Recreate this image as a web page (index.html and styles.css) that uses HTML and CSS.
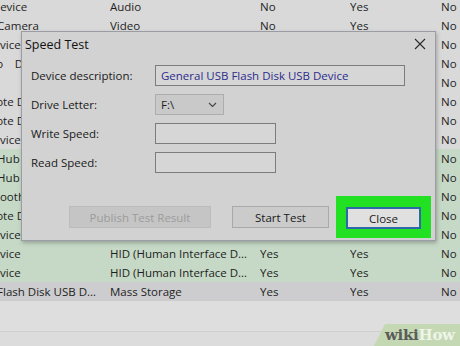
FILE: index.html
```html
<!DOCTYPE html>
<html lang="en">
<head>
    <meta charset="UTF-8">
    <title>Speed Test</title>
    <link rel="stylesheet" href="styles.css">
</head>
<body>
    <div class="screen">
        <div class="device-list">
            <div class="row"><span class="name">HD Device</span><span>Audio</span><span>No</span><span>Yes</span><span>No</span></div>
            <div class="row"><span class="name">USB Camera</span><span>Video</span><span>No</span><span>Yes</span><span>No</span></div>
            <div class="row"><span class="name">IR Device</span><span></span><span></span><span></span><span>No</span></div>
            <div class="row"><span class="name">Audio&emsp;Device</span><span></span><span></span><span></span><span>No</span></div>
            <div class="row"><span class="name">Port</span><span></span><span></span><span></span><span>No</span></div>
            <div class="row"><span class="name">Remote Device</span><span></span><span></span><span></span><span>No</span></div>
            <div class="row"><span class="name">Remote Device</span><span></span><span></span><span></span><span>No</span></div>
            <div class="row"><span class="name">IR Device</span><span></span><span></span><span></span><span>No</span></div>
            <div class="row usb"><span class="name">USB Hub</span><span></span><span></span><span></span><span>No</span></div>
            <div class="row usb"><span class="name">USB Hub</span><span></span><span></span><span></span><span>No</span></div>
            <div class="row usb"><span class="name">Bluetooth</span><span></span><span></span><span></span><span>No</span></div>
            <div class="row usb"><span class="name">Remote Device</span><span></span><span></span><span></span><span>No</span></div>
            <div class="row usb"><span class="name">IR Device</span><span></span><span></span><span></span><span>No</span></div>
            <div class="row usb"><span class="name">IR Device</span><span>HID (Human Interface Device)</span><span>Yes</span><span>Yes</span><span>No</span></div>
            <div class="row usb"><span class="name">IR Device</span><span>HID (Human Interface Device)</span><span>Yes</span><span>Yes</span><span>No</span></div>
            <div class="row selected"><span class="name">USB Flash Disk USB Device</span><span>Mass Storage</span><span>Yes</span><span>Yes</span><span>No</span></div>
        </div>
        <div class="list-footer"></div>

        <div class="dialog">
            <div class="title-bar">
                <span class="title">Speed Test</span>
                <svg class="close-x" width="12" height="12" viewBox="0 0 12 12">
                    <path d="M1 1 L11 11 M11 1 L1 11" stroke="#2b2b2b" stroke-width="1.1" fill="none"/>
                </svg>
            </div>
            <div class="dialog-body">
                <div class="field">
                    <label>Device description:</label>
                    <div class="input wide">General USB Flash Disk USB Device</div>
                </div>
                <div class="field">
                    <label>Drive Letter:</label>
                    <div class="select">
                        <span>F:\</span>
                        <svg width="9" height="6" viewBox="0 0 9 6">
                            <path d="M1 1 L4.5 4.5 L8 1" stroke="#444" stroke-width="1.1" fill="none"/>
                        </svg>
                    </div>
                </div>
                <div class="field">
                    <label>Write Speed:</label>
                    <div class="input"></div>
                </div>
                <div class="field">
                    <label>Read Speed:</label>
                    <div class="input"></div>
                </div>
            </div>
            <div class="button-row">
                <button class="btn publish" disabled>Publish Test Result</button>
                <button class="btn start">Start Test</button>
                <div class="highlight">
                    <button class="btn close">Close</button>
                </div>
            </div>
        </div>

        <div class="wikihow"><span class="wiki">wiki</span><span class="how">How</span></div>
    </div>
</body>
</html>
```

FILE: styles.css
```css
body {
    margin: 0;
    font-family: "Open Sans", "Noto Sans", Arial, sans-serif;
    color: #1e1e1e;
}

.screen {
    position: relative;
    width: 460px;
    height: 346px;
    overflow: hidden;
    background-color: #dcdcdc;
}

/* Geräteliste im Hintergrund */
.device-list {
    margin-top: -3px;
    margin-left: -28px;
    font-size: 11.5px;
}

.row {
    display: grid;
    grid-template-columns: 138px 150px 90px 91px 40px;
    height: 19px;
    line-height: 19px;
    background-color: #d9d9d9;
}

.row span {
    white-space: nowrap;
    overflow: hidden;
    text-overflow: ellipsis;
    padding-right: 10px;
}

.row .name {
    padding-right: 10px;
}

.row.usb {
    background-color: #c6d9c6;
}

.row.selected {
    background-color: #cdcdcf;
}

.list-footer {
    height: 30px;
    border-bottom: 1px solid #cfcfcf;
    background-color: #dedede;
}

/* Dialog */
.dialog {
    position: absolute;
    left: 21px;
    top: 31px;
    width: 413px;
    height: 208px;
    border: 1px solid #9c9ca4;
    background-color: #d2d2d2;
    box-shadow: 1px 2px 4px rgba(0, 0, 0, 0.25);
    font-size: 11.5px;
    display: flex;
    flex-direction: column;
}

.title-bar {
    height: 24px;
    display: flex;
    align-items: center;
    justify-content: space-between;
    padding: 0 9px 0 3px;
}

.title {
    font-size: 12.5px;
    color: #111;
}

.dialog-body {
    padding: 9px 0 0 9px;
    display: flex;
    flex-direction: column;
    gap: 8px;
}

.field {
    display: flex;
    align-items: center;
}

.field label {
    width: 124px;
    color: #1a1a1a;
}

.input {
    width: 114px;
    height: 19px;
    border: 1px solid #7c7c7c;
    background-color: #d6d6d6;
    line-height: 19px;
    padding-left: 5px;
}

.input.wide {
    width: 243px;
    color: #2c2c8c;
}

.select {
    width: 56px;
    height: 19px;
    border: 1px solid #adadad;
    background-color: #c9c9c9;
    display: flex;
    align-items: center;
    justify-content: space-between;
    padding: 0 6px 0 5px;
}

.button-row {
    margin-top: auto;
    margin-bottom: 2px;
    display: flex;
    align-items: center;
    padding-left: 47px;
}

.btn {
    font-family: inherit;
    font-size: 11.5px;
    height: 22px;
    border: 1px solid #a9a9a9;
    background-color: #cbcbcb;
    color: #1a1a1a;
    padding: 0;
}

.btn.publish {
    width: 142px;
    color: #9c9c9c;
    border-color: #bcbcbc;
    background-color: #c5c5c5;
}

.btn.start {
    width: 97px;
    margin-left: 21px;
}

.highlight {
    margin-left: 7px;
    padding: 11px 10px 9px 10px;
    background-color: #22e022;
}

.btn.close {
    width: 75px;
    border: 2px solid #2d68a8;
    background-color: #e0e0e0;
    display: block;
}

/* Wasserzeichen */
.wikihow {
    position: absolute;
    right: 0;
    bottom: 0;
    width: 86px;
    height: 22px;
    background-color: #c4d8b4;
    clip-path: polygon(11px 0, 100% 0, 100% 100%, 0 100%);
    font-family: "DejaVu Serif", "Liberation Serif", serif;
    font-weight: bold;
    font-size: 15px;
    line-height: 22px;
    padding-left: 11px;
    box-sizing: border-box;
    letter-spacing: -0.3px;
}

.wiki {
    color: #5b5b5b;
}

.how {
    color: #eef4e8;
}
```
